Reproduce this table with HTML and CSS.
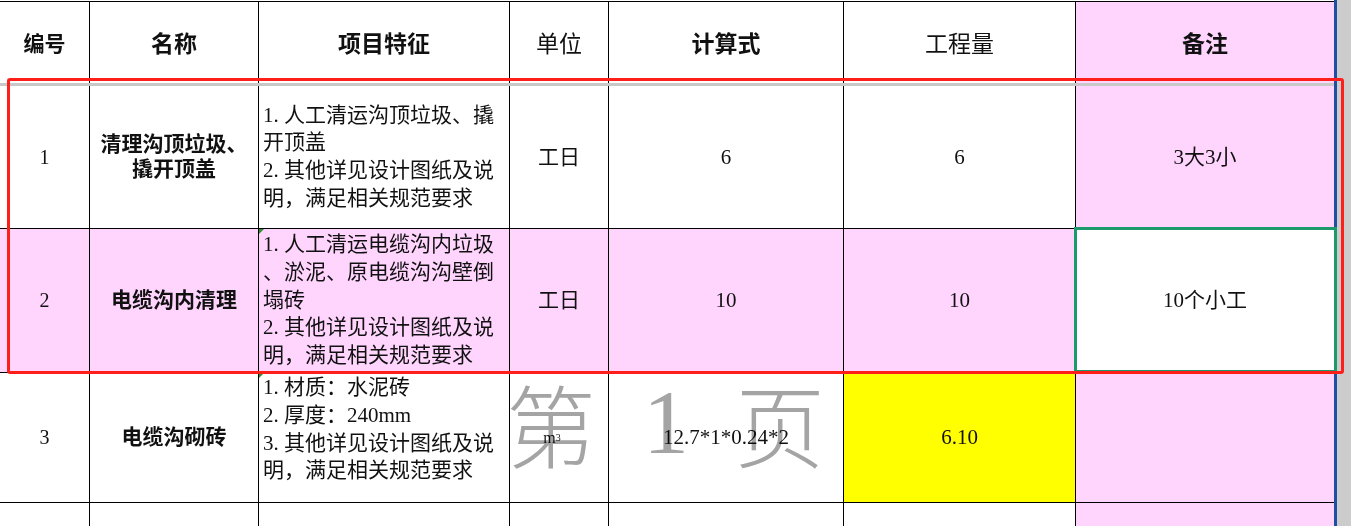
FILE: index.html
```html
<!DOCTYPE html>
<html lang="zh-CN">
<head>
<meta charset="utf-8">
<title>工程量清单</title>
<link rel="stylesheet" href="styles.css">
</head>
<body>
<div class="sheet">
  <div class="grid">
    <div class="c hd hd-sm">编号</div>
    <div class="c hd">名称</div>
    <div class="c hd">项目特征</div>
    <div class="c hd hd-reg">单位</div>
    <div class="c hd">计算式</div>
    <div class="c hd hd-reg">工程量</div>
    <div class="c hd pk">备注</div>

    <div class="freeze"></div>

    <div class="c num">1</div>
    <div class="c nm">清理沟顶垃圾、<br>撬开顶盖</div>
    <div class="c feat">1. 人工清运沟顶垃圾、撬<br>开顶盖<br>2. 其他详见设计图纸及说<br>明，满足相关规范要求</div>
    <div class="c txt">工日</div>
    <div class="c txt">6</div>
    <div class="c txt">6</div>
    <div class="c txt pk last">3大3小</div>

    <div class="c num pk">2</div>
    <div class="c nm pk">电缆沟内清理</div>
    <div class="c feat pk flag">1. 人工清运电缆沟内垃圾<br>、淤泥、原电缆沟沟壁倒<br>塌砖<br>2. 其他详见设计图纸及说<br>明，满足相关规范要求</div>
    <div class="c txt pk">工日</div>
    <div class="c txt pk">10</div>
    <div class="c txt pk">10</div>
    <div class="c txt last">10个小工</div>

    <div class="c num">3</div>
    <div class="c nm">电缆沟砌砖</div>
    <div class="c feat feat-up flag">1. 材质：水泥砖<br>2. 厚度：240mm<br>3. 其他详见设计图纸及说<br>明，满足相关规范要求</div>
    <div class="c txt unit">m<sup>3</sup></div>
    <div class="c txt">12.7*1*0.24*2</div>
    <div class="c txt yl">6.10</div>
    <div class="c txt pk last"></div>

    <div class="c"></div>
    <div class="c"></div>
    <div class="c"></div>
    <div class="c"></div>
    <div class="c"></div>
    <div class="c"></div>
    <div class="c pk last"></div>
  </div>
  <div class="rail"></div>

  <div class="watermark">
    <span class="wm wm-1">第</span>
    <span class="wm wm-2">1</span>
    <span class="wm wm-3">页</span>
  </div>
  <div class="selection"></div>
  <div class="highlight"></div>
</div>
</body>
</html>
```

FILE: styles.css
```css
html, body {
  margin: 0;
  padding: 0;
  background: #cccccc;
  overflow: hidden;
}

.sheet {
  position: relative;
  display: flex;
  width: 1351px;
  height: 526px;
  overflow: hidden;
  background: #cccccc;
  font-family: "Liberation Serif", "Noto Sans CJK SC", serif;
  color: #111111;
}

.grid {
  flex: none;
  display: grid;
  grid-template-columns: 90px 169px 251px 99px 235px 232px 258px;
  grid-template-rows: 81px 3px 143px 144px 130px 60px;
  padding-top: 2px;
  background: linear-gradient(#ffffff 0 1px, #000000 1px 2px, #ffffff 2px);
  align-self: flex-start;
}

.rail {
  flex: none;
  width: 17px;
  height: 526px;
  box-sizing: border-box;
  border-left: 3px solid #1f4fa3;
  background: #cccccc;
}

.c {
  position: relative;
  box-sizing: border-box;
  border-right: 1px solid #000000;
  border-bottom: 1px solid #000000;
  display: flex;
  align-items: center;
  justify-content: center;
  text-align: center;
  background: #ffffff;
  font-size: 21px;
  line-height: 25px;
}

.c.last {
  border-right: none;
}

.hd {
  border-bottom: none;
  font-weight: 700;
  font-size: 23px;
  padding-top: 4px;
}

.hd-sm {
  font-size: 21px;
}

.hd-reg {
  font-weight: 400;
}

.hd.pk {
  border-right: none;
}

.freeze {
  grid-column: 1 / -1;
  background: #c8c8c8;
}

.pk {
  background: #ffd5fe;
}

.yl {
  background: #ffff00;
}

.num {
  font-size: 20px;
}

.nm {
  font-weight: 700;
  font-size: 21px;
  line-height: 25px;
}

.feat {
  justify-content: flex-start;
  text-align: left;
  padding-left: 4px;
  white-space: nowrap;
  line-height: 27.7px;
  font-size: 21px;
}

.feat-up {
  padding-bottom: 16px;
}

.txt {
  font-size: 21px;
}

.unit {
  font-size: 16px;
  padding-right: 14px;
}

.unit sup {
  font-size: 10px;
  vertical-align: 6px;
  line-height: 0;
}

.flag::before {
  content: "";
  position: absolute;
  top: 0;
  left: 0;
  border-top: 5px solid #2e8b2e;
  border-right: 5px solid transparent;
}

.watermark {
  position: absolute;
  left: 0;
  top: 0;
  width: 1351px;
  height: 526px;
  pointer-events: none;
  mix-blend-mode: multiply;
  color: #a4a4a4;
}

.wm {
  position: absolute;
  display: block;
  width: 100px;
  height: 100px;
  line-height: 100px;
  text-align: center;
}

.wm-1 {
  left: 501px;
  top: 372px;
  font-family: "Noto Sans CJK SC", sans-serif;
  font-size: 90px;
  font-weight: 300;
}

.wm-2 {
  left: 616px;
  top: 372px;
  font-family: "Liberation Serif", serif;
  font-size: 92px;
}

.wm-3 {
  left: 730px;
  top: 372px;
  font-family: "Noto Sans CJK SC", sans-serif;
  font-size: 90px;
  font-weight: 300;
}

.selection {
  position: absolute;
  left: 1074px;
  top: 227px;
  width: 263px;
  height: 146px;
  box-sizing: border-box;
  border: 3px solid #1d9a6c;
  pointer-events: none;
}

.highlight {
  position: absolute;
  left: 7px;
  top: 78px;
  width: 1337px;
  height: 296px;
  box-sizing: border-box;
  border: 3px solid #ff1f1a;
  border-radius: 3px;
  pointer-events: none;
}
```
